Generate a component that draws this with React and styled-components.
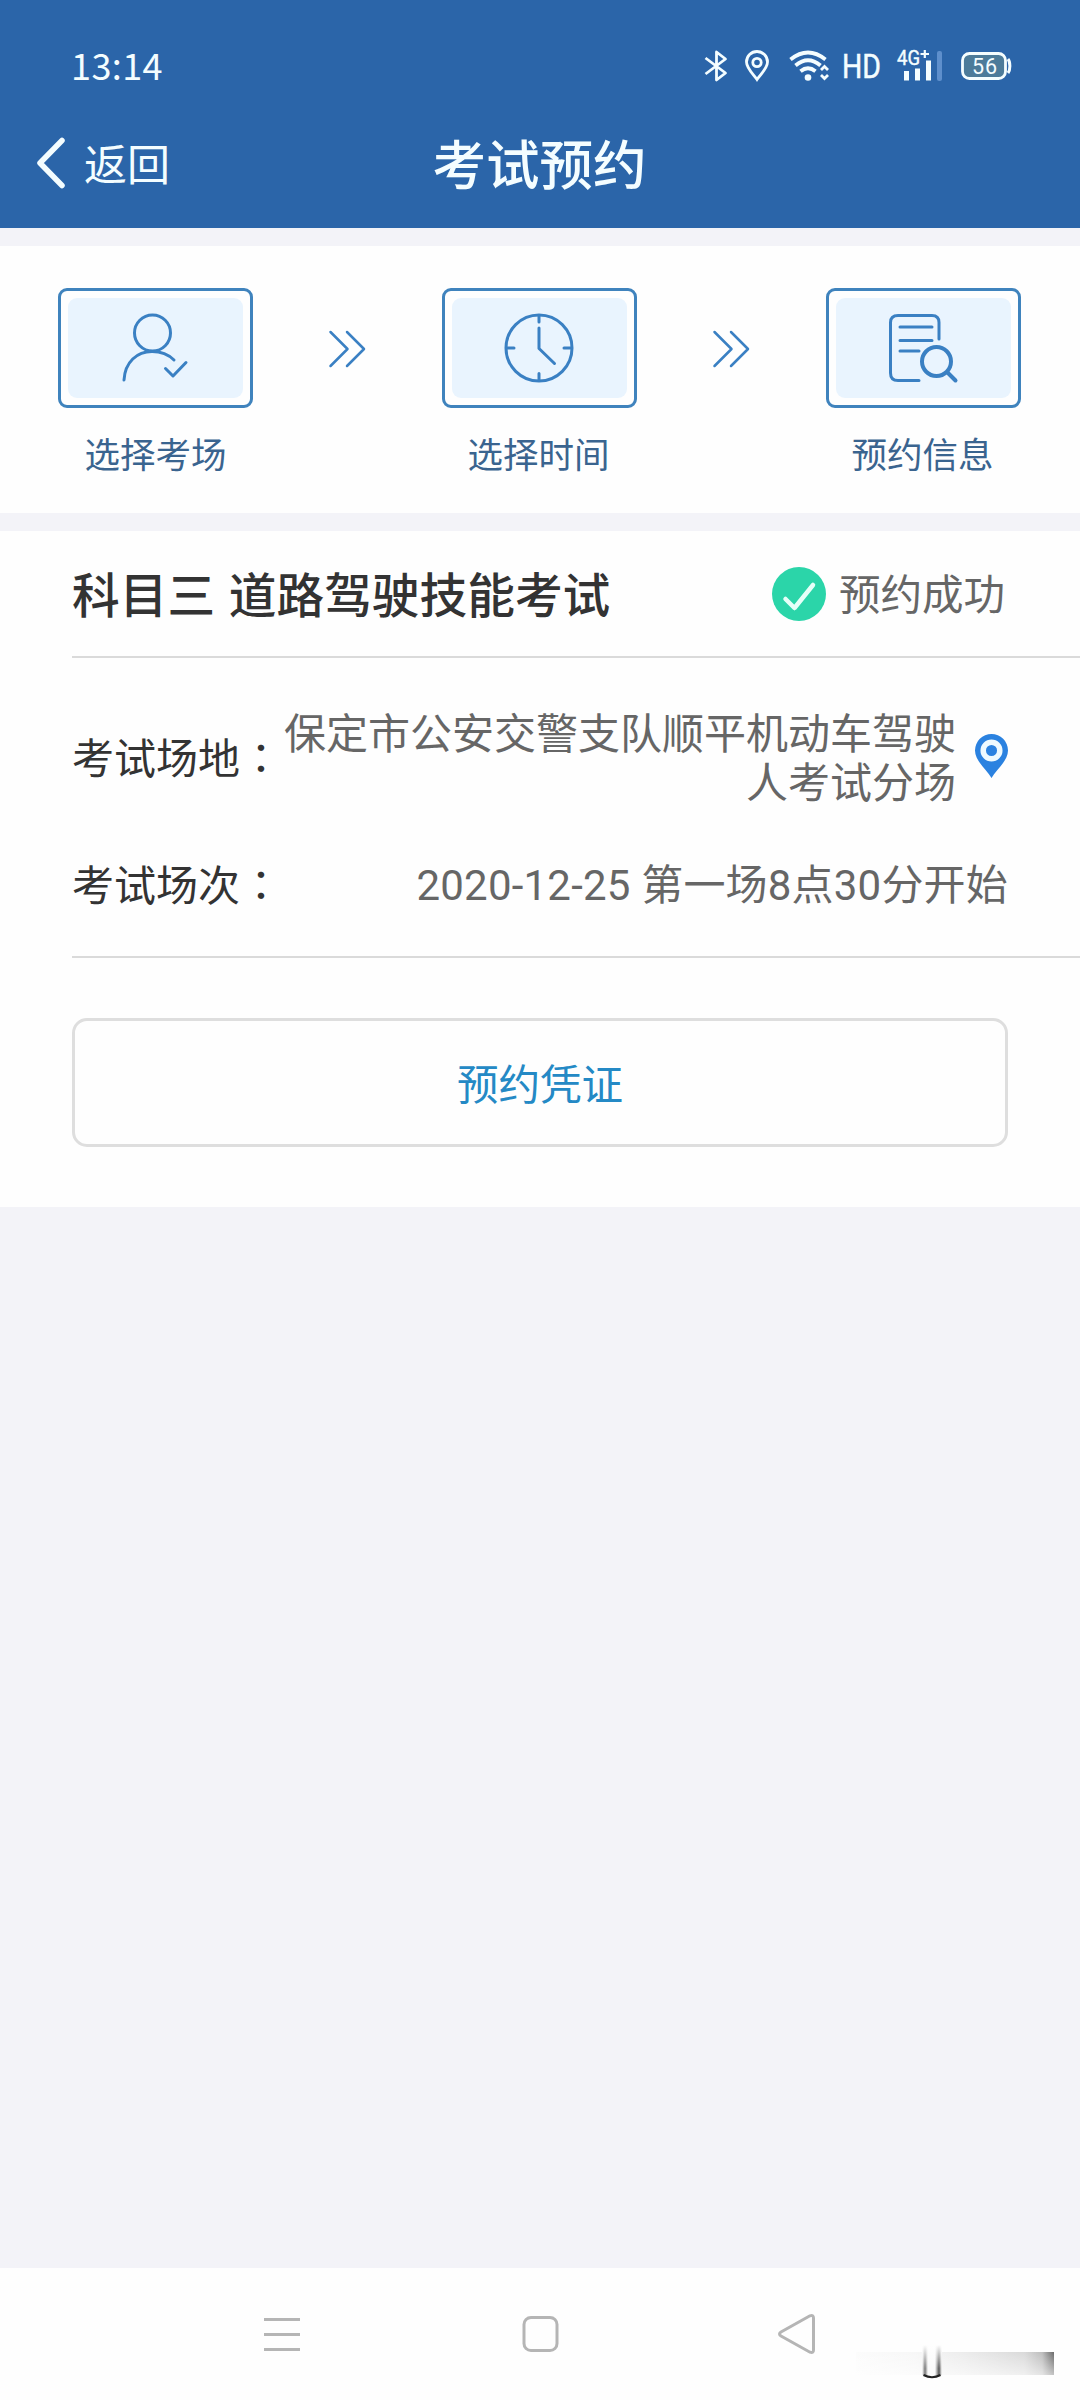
import React from 'react';
import styled, { createGlobalStyle } from 'styled-components';

const GlobalStyle = createGlobalStyle`
    * {
        box-sizing: border-box;
    }

    body {
        margin: 0;
        background: #f3f3f8;
        font-family: Roboto, "Noto Sans CJK SC", sans-serif;
    }

    svg {
        display: block;
        flex-shrink: 0;
    }
`;

const Screen = styled.div`
    position: relative;
    display: flex;
    flex-direction: column;
    width: 1080px;
    height: 2400px;
    overflow: hidden;
    background: #f3f3f8;
`;

const Header = styled.header`
    height: 228px;
    background: #2b65a9;
    color: #f4fdff;
`;

const StatusBar = styled.div`
    display: flex;
    align-items: center;
    justify-content: space-between;
    height: 132px;
    padding: 0 68px 0 71px;
`;

const Clock = styled.div`
    padding-bottom: 5px;
    font: 400 36px/36px "Noto Sans CJK SC", sans-serif;
    letter-spacing: 0.4px;
`;

const StatusIcons = styled.div`
    display: flex;
    align-items: center;
`;

const TitleBar = styled.div`
    display: grid;
    grid-template-columns: 1fr auto 1fr;
    align-items: center;
    height: 60px;
    padding: 0 36px 0 35px;
`;

const BackButton = styled.button`
    display: flex;
    align-items: center;
    gap: 17px;
    padding: 0;
    border: 0;
    background: none;
    color: inherit;
    font: 400 43px/60px "Noto Sans CJK SC", sans-serif;
`;

const BackText = styled.span`
    padding-bottom: 2px;
`;

const PageTitle = styled.h1`
    margin: 0;
    padding-bottom: 2px;
    font: 500 53.5px/60px "Noto Sans CJK SC", sans-serif;
`;

const Steps = styled.section`
    display: flex;
    justify-content: space-between;
    height: 267px;
    margin: 18px 0;
    padding: 42px 59px 0 58px;
    background: #fefefe;
    color: #3a80c3;
`;

const Step = styled.div`
    display: flex;
    flex-direction: column;
    align-items: center;
    width: 195px;
`;

const StepFrame = styled.div`
    width: 195px;
    height: 120px;
    padding: 7px;
    border: 3px solid #3f83bd;
    border-radius: 9px;
`;

const StepIcon = styled.div`
    display: flex;
    align-items: center;
    justify-content: center;
    height: 100%;
    padding-right: 2px;
    border-radius: 9px;
    background: #e9f4fe;
`;

const StepLabel = styled.div`
    margin-top: 27px;
    padding-right: ${props => (props.$first ? 0 : 2)}px;
    color: #3a648f;
    font-size: 35.5px;
    line-height: 42px;
    white-space: nowrap;
`;

const StepArrow = styled.div`
    display: flex;
    align-items: center;
    height: 122px;
    padding-right: 2px;
`;

const Card = styled.section`
    height: 676px;
    padding-left: 72px;
    background: #fefefe;
    color: #333;
    font-size: 42px;
`;

const CardHeader = styled.div`
    display: flex;
    align-items: center;
    justify-content: space-between;
    height: 127px;
    padding-right: 75px;
    border-bottom: 2px solid #dadada;
`;

const Subject = styled.h2`
    margin: 0;
    padding-bottom: 1px;
    font: 500 47.700px/60px "Noto Sans CJK SC", sans-serif;
    word-spacing: 3px;
`;

const Status = styled.div`
    display: flex;
    align-items: center;
    gap: 13px;
    color: #666;
    font-size: 41.500px;
    line-height: 60px;
`;

const StatusText = styled.span`
    padding-top: 5px;
`;

const Details = styled.div`
    height: 300px;
    padding: 50px 72px 0 0;
    border-bottom: 2px solid #dadada;
`;

const DetailRow = styled.div`
    display: flex;
    align-items: center;
    justify-content: space-between;
    height: ${props => props.$height}px;
    white-space: nowrap;
`;

const DetailLabel = styled.div`
    line-height: 49px;
`;

// The TC face keeps the full-width colon in the middle of its cell
const Colon = styled.span`
    font-family: "Noto Sans CJK TC", sans-serif;
`;

const DetailValue = styled.div`
    display: flex;
    align-items: center;
    gap: 19px;
    padding-top: ${props => props.$drop}px;
    color: #666;
    line-height: 49px;
    letter-spacing: ${props => props.$spacing || 0}px;
    text-align: right;

    svg {
        margin-bottom: 6px;
    }
`;

const VoucherButton = styled.button`
    display: block;
    width: 936px;
    height: 129px;
    margin-top: 60px;
    padding: 0 0 2px;
    border: 3px solid #dedede;
    border-radius: 15px;
    background: none;
    color: #2489c5;
    font: 400 41.5px/60px "Noto Sans CJK SC", sans-serif;
`;

const NavBar = styled.nav`
    display: flex;
    justify-content: space-between;
    height: 132px;
    margin-top: auto;
    padding: 44px 263px 0 262px;
    background: #fefefe;
    color: #b5b5b5;
`;

const CornerMark = styled.div`
    position: absolute;
    left: 852px;
    bottom: 20px;
`;

const BackIcon = () => (
    <svg width="32" height="54" viewBox="0 0 32 54" fill="none" stroke="currentColor" strokeWidth="5.5" strokeLinecap="round" strokeLinejoin="round">
        <path d="M27 4.500L5 27L27 49.500" />
    </svg>
);

const StatusGlyphs = () => (
    <svg width="312" height="40" viewBox="0 0 312 40" fill="none" stroke="currentColor" strokeWidth="2.800">
        {/* bluetooth */}
        <path d="M5.500 12L25.500 27L16.500 34V6L25.500 13L5.500 28" strokeLinejoin="round" />
        {/* location */}
        <path d="M57 33.500C53 28 46.500 22 46.500 16A10.500 10.500 0 0 1 67.500 16C67.500 22 61 28 57 33.500Z" />
        <circle cx="57" cy="16.500" r="4.200" />
        {/* wifi */}
        <g strokeWidth="3.800">
            <path d="M90.500 13.500Q108 -0.500 125.500 13.500" />
            <path d="M95.500 19.500Q108 9 120.500 19.500" />
            <path d="M100.500 25.300Q108 19.300 115.500 25.300" />
        </g>
        <circle cx="108" cy="31.500" r="3.300" fill="currentColor" stroke="none" />
        <path d="M121 24L124.500 20.500L128 24M121 29L124.500 32.500L128 29" strokeWidth="2.800" />
        <text x="142" y="31.500" fill="currentColor" stroke="currentColor" strokeWidth="0.500" fontFamily="Roboto" fontSize="33.500" textLength="39" lengthAdjust="spacingAndGlyphs">HD</text>
        {/* mobile signal */}
        <text x="197" y="19" fill="currentColor" stroke="currentColor" strokeWidth="0.400" fontFamily="Roboto" fontSize="20" textLength="23" lengthAdjust="spacingAndGlyphs">4G</text>
        <path d="M220.500 8H229M224.800 4V12" strokeWidth="2.200" />
        <path d="M206.500 27.500V32M217.500 25V32M228.500 17V32" strokeWidth="5" strokeLinecap="square" />
        <rect x="237" y="5" width="5" height="30" rx="2" fill="#5e8fcc" stroke="none" />
        {/* battery */}
        <rect x="262.500" y="7.500" width="43" height="25" rx="7" fill="#4c7b9a" />
        <path d="M308 13C310.500 16 310.500 24 308 27" strokeWidth="3" />
        <text x="272" y="27.500" fill="currentColor" stroke="none" fontFamily="Roboto" fontSize="21.500" textLength="25" lengthAdjust="spacing">56</text>
    </svg>
);

const UserCheckIcon = () => (
    <svg width="72" height="72" viewBox="0 0 72 72" fill="none" stroke="#3a80c3" strokeWidth="3" strokeLinecap="round" strokeLinejoin="round">
        <circle cx="33.500" cy="21" r="18" />
        <path d="M5 68C6 50 18 39.500 33 39.500C43 39.500 50 43 55 48" />
        <path d="M46.500 56.500L54 64L67 50.500" />
    </svg>
);

const ClockIcon = () => (
    <svg width="72" height="72" viewBox="0 0 72 72" fill="none" stroke="#3a80c3" strokeWidth="3" strokeLinecap="round">
        <circle cx="36" cy="36" r="33" />
        <path d="M36 3.500V10M36 61.500V68M3.500 36H11M61 36H68" />
        <path d="M36 16V36.500L51.500 51.500" strokeLinejoin="round" />
    </svg>
);

const DocSearchIcon = () => (
    <svg width="72" height="72" viewBox="0 0 72 72" fill="none" stroke="#3a80c3" strokeWidth="3" strokeLinecap="round">
        <path d="M32 68.500H11Q3.500 68.500 3.500 61V10.500Q3.500 3.500 11 3.500H45Q52 3.500 52 10.500V27" />
        <path d="M13 15H45M13 28.500H45M13 39H32" />
        <circle cx="49.500" cy="49.500" r="14.500" strokeWidth="4" />
        <path d="M61 61L68.500 68.500" strokeWidth="4" />
    </svg>
);

const DoubleArrow = () => (
    <svg width="38" height="38" viewBox="0 0 38 38" fill="none" stroke="#3a80c3" strokeWidth="2.500" strokeLinecap="round" strokeLinejoin="round">
        <path d="M2.500 2L19.500 19L2.500 36M19 2L36 19L19 36" />
    </svg>
);

const SuccessIcon = () => (
    <svg width="54" height="54" viewBox="0 0 54 54">
        <circle cx="27" cy="27" r="27" fill="#2bd5a9" />
        <path d="M13.500 32L22.500 41L41 18" fill="none" stroke="#e6fff8" strokeWidth="4.500" strokeLinecap="round" strokeLinejoin="round" />
    </svg>
);

const PinIcon = () => (
    <svg width="33" height="44" viewBox="0 0 33 44">
        <path d="M16.500 44C12 36 0 27 0 16.500A16.500 16.500 0 0 1 33 16.500C33 27 21 36 16.500 44Z" fill="#2b82e0" />
        <circle cx="16.500" cy="16.500" r="8.300" fill="none" stroke="#eefaff" strokeWidth="5.500" />
    </svg>
);

const MenuIcon = () => (
    <svg width="40" height="44" viewBox="0 0 40 44" stroke="currentColor" strokeWidth="3">
        <path d="M2 7.500H38M2 22.500H38M2 37.500H38" />
    </svg>
);

const HomeIcon = () => (
    <svg width="40" height="44" viewBox="0 0 40 44" fill="none" stroke="currentColor" strokeWidth="3">
        <rect x="4" y="5.500" width="33" height="33" rx="7" />
    </svg>
);

const NavBackIcon = () => (
    <svg width="40" height="44" viewBox="0 0 40 44" fill="none" stroke="currentColor" strokeWidth="3">
        <path d="M33 3.800L4 20Q1 22 4 24L33 40.200Q36.500 41.500 36.500 38V6Q36.500 2.500 33 3.800Z" />
    </svg>
);

const FadedMark = () => (
    <svg width="204" height="36" viewBox="0 0 204 36">
        <defs>
            <linearGradient id="band">
                <stop offset="0" stopColor="#fcfcfc" />
                <stop offset="0.300" stopColor="#f7f7f7" />
                <stop offset="0.550" stopColor="#ececec" />
                <stop offset="0.850" stopColor="#dadada" />
                <stop offset="0.940" stopColor="#bdbdbd" />
                <stop offset="1" stopColor="#6a6a6a" />
            </linearGradient>
            <linearGradient id="shade" x2="0" y2="1">
                <stop offset="0" stopColor="#fff" stopOpacity="0" />
                <stop offset="1" stopColor="#fff" stopOpacity="0.600" />
            </linearGradient>
            <linearGradient id="stem">
                <stop offset="0" stopColor="#fff" />
                <stop offset="0.150" stopColor="#777" />
                <stop offset="0.300" stopColor="#fafafa" />
                <stop offset="0.650" stopColor="#fafafa" />
                <stop offset="0.850" stopColor="#555" />
                <stop offset="1" stopColor="#fff" />
            </linearGradient>
            <linearGradient id="fade" x2="0" y2="1">
                <stop offset="0" stopColor="#fefefe" />
                <stop offset="0.750" stopColor="#fefefe" stopOpacity="0" />
            </linearGradient>
        </defs>
        <rect x="4" y="8" width="198" height="23" fill="url(#band)" />
        <rect x="4" y="8" width="198" height="23" fill="url(#shade)" />
        <path d="M70 1H90V31Q80 36 70 31Z" fill="url(#stem)" />
        <rect x="70" y="1" width="20" height="31" fill="url(#fade)" />
        <path d="M71.500 31Q80 35.500 88.500 31" fill="none" stroke="#222" strokeWidth="2" />
    </svg>
);

const steps = [
    { label: '选择考场', Icon: UserCheckIcon },
    { label: '选择时间', Icon: ClockIcon },
    { label: '预约信息', Icon: DocSearchIcon },
];

export default function App() {
    return (
        <Screen lang="zh-CN">
            <GlobalStyle />

            <Header>
                <StatusBar>
                    <Clock>13:14</Clock>
                    <StatusIcons>
                        <StatusGlyphs />
                    </StatusIcons>
                </StatusBar>
                <TitleBar>
                    <BackButton>
                        <BackIcon />
                        <BackText>返回</BackText>
                    </BackButton>
                    <PageTitle>考试预约</PageTitle>
                </TitleBar>
            </Header>

            <Steps>
                {steps.map(({ label, Icon }, index) => (
                    <React.Fragment key={label}>
                        {index > 0 && (
                            <StepArrow>
                                <DoubleArrow />
                            </StepArrow>
                        )}
                        <Step>
                            <StepFrame>
                                <StepIcon>
                                    <Icon />
                                </StepIcon>
                            </StepFrame>
                            <StepLabel $first={index === 0}>{label}</StepLabel>
                        </Step>
                    </React.Fragment>
                ))}
            </Steps>

            <Card>
                <CardHeader>
                    <Subject>科目三 道路驾驶技能考试</Subject>
                    <Status>
                        <SuccessIcon />
                        <StatusText>预约成功</StatusText>
                    </Status>
                </CardHeader>

                <Details>
                    <DetailRow $height={98}>
                        <DetailLabel>考试场地<Colon lang="zh-TW">：</Colon></DetailLabel>
                        <DetailValue $drop={4}>
                            <span>
                                保定市公安交警支队顺平机动车驾驶
                                <br />
                                人考试分场
                            </span>
                            <PinIcon />
                        </DetailValue>
                    </DetailRow>
                    <DetailRow $height={156}>
                        <DetailLabel>考试场次<Colon lang="zh-TW">：</Colon></DetailLabel>
                        <DetailValue $drop={2} $spacing={0.2}>2020-12-25 第一场8点30分开始</DetailValue>
                    </DetailRow>
                </Details>

                <VoucherButton>预约凭证</VoucherButton>
            </Card>

            <NavBar>
                <MenuIcon />
                <HomeIcon />
                <NavBackIcon />
            </NavBar>

            <CornerMark>
                <FadedMark />
            </CornerMark>
        </Screen>
    );
}
